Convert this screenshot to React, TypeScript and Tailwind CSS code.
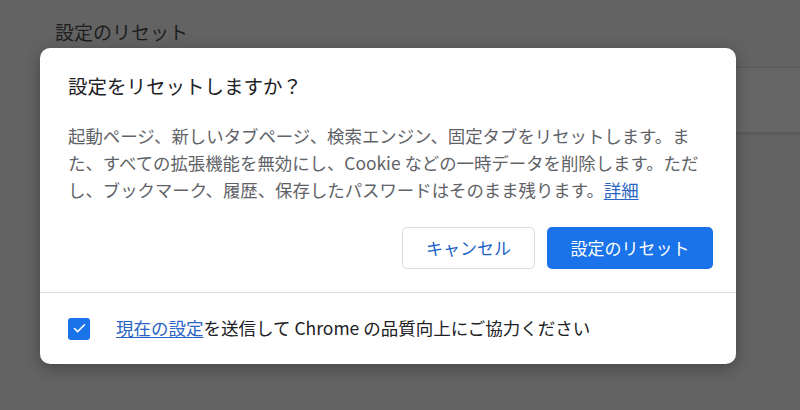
import { Check } from 'lucide-react'

const font = { fontFamily: '"Noto Sans CJK JP", "Noto Sans", sans-serif' }

export default function App() {
  return (
    <div className="relative h-[410px] w-[800px] overflow-hidden bg-[#636363]" style={font}>
      {/* page behind the overlay */}
      <div className="pl-[55px] pt-[18px]">
        <h2 className="text-[19px] leading-[28px] text-[#1e1e1e]">設定のリセット</h2>
        <div className="mt-[21px] h-[66px] rounded-tl-md border-y border-[#5c5c5c] bg-[#666666] shadow-[0_1px_2px_rgba(0,0,0,0.15)]" />
      </div>

      {/* dialog */}
      <div className="absolute left-[40px] top-[48px] w-[696px] rounded-[10px] bg-white shadow-[0_4px_16px_rgba(0,0,0,0.3)]">
        <div className="px-[28px] pt-[24px]">
          <h1 className="text-[19.5px] leading-[28px] text-[#202124]">設定をリセットしますか？</h1>
          <p className="mt-[22px] text-[17.4px] leading-[27px] text-[#5f6368]">
            起動ページ、新しいタブページ、検索エンジン、固定タブをリセットします。ま
            <br />
            た、すべての拡張機能を無効にし、Cookie などの一時データを削除します。ただ
            <br />
            し、ブックマーク、履歴、保存したパスワードはそのまま残ります。
            <a className="text-[#2a64c4] underline underline-offset-2">詳細</a>
          </p>
        </div>
        <div className="flex justify-end gap-[12px] pr-[23px] pt-[24px] pb-[23px]">
          <button className="h-[42px] w-[133px] rounded-[5px] border border-[#dadce0] bg-white text-[17px] text-[#1a63c9]">
            キャンセル
          </button>
          <button className="h-[42px] w-[166px] rounded-[5px] bg-[#1a73e8] text-[17px] text-white">
            設定のリセット
          </button>
        </div>
        <div className="flex h-[72px] items-center border-t border-[#dadce0] pl-[28px]">
          <div className="flex h-[22px] w-[22px] items-center justify-center rounded-[3px] bg-[#1a73e8]">
            <Check className="h-[15px] w-[15px] text-white" strokeWidth={2.5} />
          </div>
          <span className="ml-[26px] text-[17.5px] text-[#202124]">
            <a className="text-[#2a64c4] underline underline-offset-2">現在の設定</a>
            を送信して Chrome の品質向上にご協力ください
          </span>
        </div>
      </div>
    </div>
  )
}
